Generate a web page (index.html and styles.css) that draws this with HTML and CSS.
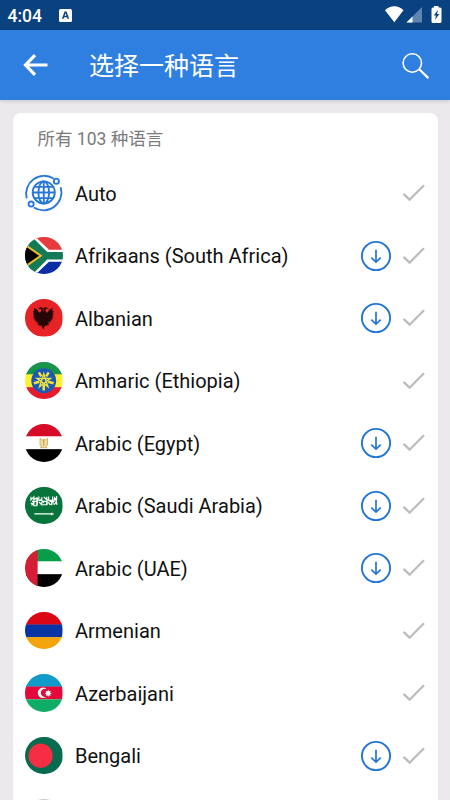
FILE: index.html
```html
<!DOCTYPE html>
<html lang="zh-CN">
<head>
<meta charset="utf-8">
<title>选择一种语言</title>
<link rel="stylesheet" href="styles.css">
</head>
<body>
<svg class="defs" width="0" height="0" aria-hidden="true">
  <symbol id="check" viewBox="0 0 24 20"><path d="M1.5 10.8 7.6 16.7 22 2.2" fill="none" stroke="#bdbdbd" stroke-width="2.3"/></symbol>
  <symbol id="download" viewBox="0 0 32 32"><g fill="none" stroke="#2476d4" stroke-width="1.9"><circle cx="16" cy="16" r="14.1"/><path d="M16 9.7v12.2M11.3 17.6l4.7 4.5 4.7-4.5" stroke-width="1.7"/></g></symbol>
</svg>
<div class="screen">
  <div class="status">
    <span class="clock">4:04</span>
    <svg class="app" viewBox="0 0 13 13"><rect width="13" height="13" rx="1.5" fill="#fff"/><path d="M3.7 9.8 6.1 3.2h.9l2.4 6.6M4.7 7.6h3.8" fill="none" stroke="#0a427f" stroke-width="1.5"/></svg>
    <svg class="signals" viewBox="0 0 60 20">
      <path d="M1 5.2C6.500-.2 14.200-.2 19.500 5.200L10.300 17.200Z" fill="#fff"/>
      <path d="M22.500 17.500 38 2v15.500Z" fill="#5f86b0"/><path d="M22.500 17.500 28.500 11.600v5.900Z" fill="#fff"/>
      <path d="M50 1h4.500v1.500h1.500q1.500 0 1.500 1.500v12.500q0 1.500-1.500 1.500h-7q-1.500 0-1.500-1.500V4q0-1.500 1.500-1.500h1Z" fill="#fff"/>
      <path d="m54 4.800-4.200 5.700h2.200l-1 4.600 4.300-6h-2.300Z" fill="#0a427f"/>
    </svg>
  </div>
  <header class="bar">
    <svg class="back" viewBox="0 0 26 24"><path d="M25.500 12H4M13 2.200 3.500 12l9.500 9.800" fill="none" stroke="#fff" stroke-width="3.200"/></svg>
    <h1>选择一种语言</h1>
    <svg class="search" viewBox="0 0 28 28"><g fill="none" stroke="#fff"><circle cx="10.300" cy="11" r="9.200" stroke-width="1.600"/><path d="m17.200 17.300 9.200 8.800" stroke-width="2.200"/></g></svg>
  </header>
  <main class="card">
    <p class="count">所有 103 种语言</p>
    <ul>
      <li><svg class="flag auto" viewBox="0 0 38 38"><g fill="none" stroke="#2878d8" stroke-width="1.900"><circle cx="19" cy="18.700" r="11.200"/><ellipse cx="19" cy="18.700" rx="5.400" ry="11.200"/><path d="M19 7.500v22.400M7.800 18.700h22.400M9.500 13h19M9.500 24.400h19M1.700 24.500A18.200 18.200 0 0 1 29 4.600M36.200 13.500A18.200 18.200 0 0 1 9 34"/><circle cx="31.800" cy="7.300" r="2.600"/><circle cx="6.200" cy="30.500" r="2.600"/></g></svg><span class="name">Auto</span><svg class="check"><use href="#check"/></svg></li>
      <li><svg class="flag" viewBox="0 0 38 38"><rect width="38" height="19" fill="#e63b3d"/><rect y="19" width="38" height="19" fill="#0b2da5"/><path d="M0-2 22 19 0 40M20 19h20" fill="none" stroke="#fff" stroke-width="12"/><path d="M-2-4 -2 42 0 40 22 19 0-2Z" fill="#137b55"/><path d="M0-2 21 19 0 40M20 19h20" fill="none" stroke="#137b55" stroke-width="7.500"/><path d="M-2 6.500 16 19-2 31.500Z" fill="#000" stroke="#f2bd2c" stroke-width="2"/></svg><span class="name">Afrikaans (South Africa)</span><svg class="download"><use href="#download"/></svg><svg class="check"><use href="#check"/></svg></li>
      <li><svg class="flag" viewBox="0 0 38 38"><rect width="38" height="38" fill="#e72326"/><path d="m19 13-1-2.500 1-1-3-1.500-3 1.500 3 .5.500 2-1.500 2-1.500-1-1-2-3.500-2 .5 3-1.500.5 1 2-1 1 1.500 1.500-1.500 1.500 2 .5-1.500 2 2.500-.5-1 2.500 2.500-1-1 2.500 2.500-1-1.500 3 2-.5.500 1.500 1.500-1 2 4.500 2-4.500 1.500 1 .5-1.500 2 .5-1.500-3 2.500 1-1-2.500 2.500 1-1-2.500 2.500.5-1.500-2 2-.5-1.500-1.500 1.500-1.500-1-1 1-2-1.500-.5.500-3-3.500 2-1 2-1.500 1-1.500-2 .5-2 3-.5-3-1.500-3 1.500 1 1Z" fill="#250708"/></svg><span class="name">Albanian</span><svg class="download"><use href="#download"/></svg><svg class="check"><use href="#check"/></svg></li>
      <li><svg class="flag" viewBox="0 0 38 38"><rect width="38" height="13" fill="#17934a"/><rect y="12.500" width="38" height="13" fill="#ffef31"/><rect y="25.500" width="38" height="13" fill="#e51c2c"/><circle cx="19" cy="19" r="12.600" fill="#1c58b5"/><path d="m19 12 4.300 13-11-8.200h13.400l-11 8.200Z" fill="none" stroke="#e9df42" stroke-width="1.500"/><path d="M21.500 14.500 24 10.500M16.500 14.500 14 10.500M23.500 20l5.500 1.500M14.500 20 9 21.500M19 23v6" stroke="#f4e235" stroke-width="2.600"/></svg><span class="name">Amharic (Ethiopia)</span><svg class="check"><use href="#check"/></svg></li>
      <li><svg class="flag" viewBox="0 0 38 38"><rect width="38" height="13" fill="#d60b25"/><rect y="12.500" width="38" height="13.500" fill="#fff"/><rect y="25.500" width="38" height="13" fill="#000"/><path d="m15.200 14.500 2.500 2 1.300-1.500 1.300 1.500 2.500-2v7l-2 1 1.700 1.500h-7l1.700-1.500-2-1Z" fill="#f1dfa7" stroke="#d0b060" stroke-width=".9"/><path d="M19 16v6" stroke="#be9636" stroke-width="1"/></svg><span class="name">Arabic (Egypt)</span><svg class="download"><use href="#download"/></svg><svg class="check"><use href="#check"/></svg></li>
      <li><svg class="flag" viewBox="0 0 38 38"><rect width="38" height="38" fill="#08743b"/><g fill="none" stroke="#fff" stroke-width="1.200"><path d="M6 10v3l3-3v3l3-2v3M14 9.500v4h3v-3M19 10l3 3v-3M24 9.500v4h4v-4M30 10v3h2v-4M6 16q1.500 2 3-1v4h3v-4M14 15l3 3v-3M18 18h4v-3M24 15q0 3 3 3v-3M29 18q2-1 3-4M7 14.500h5M17 14.500h5M25 14.500h5M6.500 18.500l3-2M16 12l3 4M22.500 12v6M28.500 12v5M12.500 11v7M31 11l1.500 7"/><path d="M9.500 27.200h19.500M27 26v2.500"/></g></svg><span class="name">Arabic (Saudi Arabia)</span><svg class="download"><use href="#download"/></svg><svg class="check"><use href="#check"/></svg></li>
      <li><svg class="flag" viewBox="0 0 38 38"><rect width="38" height="13" fill="#079e49"/><rect y="12.500" width="38" height="13.500" fill="#fff"/><rect y="25.500" width="38" height="13" fill="#000"/><rect width="12.800" height="38" fill="#d51d35"/></svg><span class="name">Arabic (UAE)</span><svg class="download"><use href="#download"/></svg><svg class="check"><use href="#check"/></svg></li>
      <li><svg class="flag" viewBox="0 0 38 38"><rect width="38" height="13" fill="#dc0715"/><rect y="12.700" width="38" height="13" fill="#0834a4"/><rect y="25.400" width="38" height="13" fill="#f4a50d"/></svg><span class="name">Armenian</span><svg class="check"><use href="#check"/></svg></li>
      <li><svg class="flag" viewBox="0 0 38 38"><rect width="38" height="13" fill="#109bcb"/><rect y="12.700" width="38" height="13" fill="#e50939"/><rect y="25.700" width="38" height="13" fill="#0eac65"/><path d="M21.800 15.200a5.300 5.300 0 1 0 0 7.800 4.200 4.200 0 1 1 0-7.800Z" fill="#fff"/><path d="m23.500 15.900.8 1.700 1.800-.6-.7 1.800 1.700.8-1.700.8.700 1.800-1.800-.6-.8 1.700-.8-1.700-1.800.6.700-1.800-1.700-.8 1.700-.8-.7-1.800 1.800.6Z" fill="#fff"/></svg><span class="name">Azerbaijani</span><svg class="check"><use href="#check"/></svg></li>
      <li><svg class="flag" viewBox="0 0 38 38"><rect width="38" height="38" fill="#076b50"/><circle cx="15.800" cy="19" r="12.300" fill="#f72d43"/></svg><span class="name">Bengali</span><svg class="download"><use href="#download"/></svg><svg class="check"><use href="#check"/></svg></li>
      <li><svg class="flag" viewBox="0 0 38 38"><rect width="38" height="38" fill="#c9cbcc"/></svg></li>
    </ul>
  </main>
</div>
</body>
</html>
```
FILE: styles.css
```css
* { box-sizing: border-box; }
body { margin: 0; font-family: Roboto, "Noto Sans CJK SC", sans-serif; }
.defs { position: absolute; }
.screen { height: 800px; overflow: hidden; display: flex; flex-direction: column; background: #ebe9ec; }
svg { display: block; flex: none; }
.status { height: 30px; flex: none; display: flex; align-items: center; padding: 0 6px 0 7.5px; background: #0a427f; color: #fff; }
.clock { font-size: 17.5px; font-weight: 500; width: 51.5px; line-height: 30px; padding-top: 1px; }
.app { width: 13px; height: 13px; margin-top: 1px; }
.signals { width: 60px; height: 20px; margin-left: auto; margin-top: -1px; }
.bar { height: 70px; flex: none; display: flex; align-items: center; padding: 0 20px 0 22px; background: #2f7fe0; color: #fff; box-shadow: 0 1px 4px rgba(0, 0, 0, .16); }
.back { width: 26px; height: 24px; }
h1 { margin: 0 auto 0 41px; padding-top: 3px; font-size: 25px; font-weight: 400; line-height: 36px; }
.search { width: 28px; height: 28px; margin-top: 2px; }
.card { flex: none; margin: 12.5px 12.5px 0; padding: 0 12px 0 12.5px; background: #fff; border-radius: 8px; }
.count { margin: 0; height: 49.25px; padding: 13px 0 0 12.5px; font-size: 17.5px; line-height: 26px; color: #7b7b7b; }
ul { margin: 0; padding: 0; list-style: none; }
li { height: 62.5px; display: flex; align-items: center; }
.flag { width: 37.5px; height: 37.5px; border-radius: 50%; }
.flag.auto { overflow: visible; border-radius: 0; }
.name { flex: 1; padding: 1px 0 0 12.5px; font-size: 20px; line-height: 28px; color: #111; white-space: nowrap; }
.download { width: 32px; height: 32px; margin-right: 10px; }
.check { width: 24px; height: 20px; }
```
